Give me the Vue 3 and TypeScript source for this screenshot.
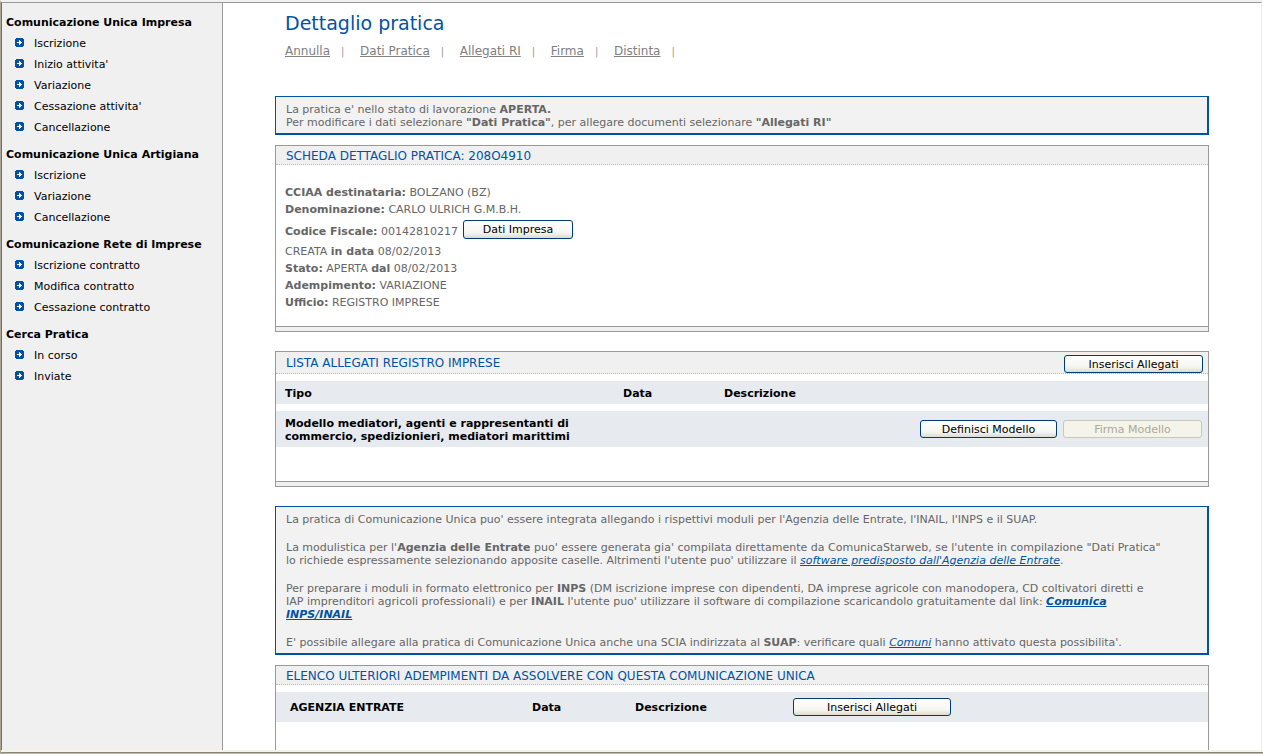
<script setup lang="ts">
interface MenuGroup {
  title: string
  items: string[]
}

const menu: MenuGroup[] = [
  {
    title: 'Comunicazione Unica Impresa',
    items: ['Iscrizione', "Inizio attivita'", 'Variazione', "Cessazione attivita'", 'Cancellazione'],
  },
  { title: 'Comunicazione Unica Artigiana', items: ['Iscrizione', 'Variazione', 'Cancellazione'] },
  {
    title: 'Comunicazione Rete di Imprese',
    items: ['Iscrizione contratto', 'Modifica contratto', 'Cessazione contratto'],
  },
  { title: 'Cerca Pratica', items: ['In corso', 'Inviate'] },
]

const tabs: string[] = ['Annulla', 'Dati Pratica', 'Allegati RI', 'Firma', 'Distinta']
</script>

<template>
  <div class="window">
    <div class="frame">
      <nav class="sidebar" aria-label="Menu">
        <section v-for="group in menu" :key="group.title" class="group">
          <h2>{{ group.title }}</h2>
          <ul>
            <li v-for="item in group.items" :key="item">
              <a href="#">
                <svg class="bullet" width="9" height="9" viewBox="0 0 9 9" shape-rendering="crispEdges" aria-hidden="true">
                  <path d="M1 0h7v1h1v7h-1v1H1v-1H0V1h1z" fill="#0052a5" />
                  <path d="M4 2h1v1h1v1h1v1h-1v1h-1v1h-1V5H2V4h2z" fill="#fff" />
                </svg>
                <span>{{ item }}</span>
              </a>
            </li>
          </ul>
        </section>
      </nav>

      <main class="content">
        <h1>Dettaglio pratica</h1>
        <nav class="tabs" aria-label="Sezioni della pratica">
          <template v-for="tab in tabs" :key="tab">
            <a href="#">{{ tab }}</a><span class="bar">|</span>
          </template>
        </nav>

        <div class="notice">
          <p>
            La pratica e' nello stato di lavorazione <b>APERTA.</b><br />
            Per modificare i dati selezionare <b>"Dati Pratica"</b>, per allegare documenti selezionare
            <b>"Allegati RI"</b>
          </p>
        </div>

        <section class="card detail">
          <header><h3>SCHEDA DETTAGLIO PRATICA: 208O4910</h3></header>
          <div class="facts">
            <p><b>CCIAA destinataria:</b> BOLZANO (BZ)</p>
            <p><b>Denominazione:</b> CARLO ULRICH G.M.B.H.</p>
            <p class="with-button">
              <span><b>Codice Fiscale:</b> 00142810217</span>
              <button type="button" class="btn w-110">Dati Impresa</button>
            </p>
            <p>CREATA <b>in data</b> 08/02/2013</p>
            <p><b>Stato:</b> APERTA <b>dal</b> 08/02/2013</p>
            <p><b>Adempimento:</b> VARIAZIONE</p>
            <p><b>Ufficio:</b> REGISTRO IMPRESE</p>
          </div>
          <div class="foot"></div>
        </section>

        <section class="card attachments">
          <header class="tall">
            <h3>LISTA ALLEGATI REGISTRO IMPRESE</h3>
            <button type="button" class="btn w-139">Inserisci Allegati</button>
          </header>
          <table class="list">
            <colgroup>
              <col class="c-type" />
              <col class="c-date" />
              <col class="c-desc" />
              <col />
            </colgroup>
            <thead>
              <tr>
                <th scope="col">Tipo</th>
                <th scope="col">Data</th>
                <th scope="col">Descrizione</th>
                <td></td>
              </tr>
            </thead>
            <tbody>
              <tr>
                <th scope="row">Modello mediatori, agenti e rappresentanti di commercio, spedizionieri, mediatori marittimi</th>
                <td></td>
                <td></td>
                <td>
                  <div class="actions">
                    <button type="button" class="btn w-137">Definisci Modello</button>
                    <button type="button" class="btn w-139" disabled>Firma Modello</button>
                  </div>
                </td>
              </tr>
            </tbody>
          </table>
          <div class="foot"></div>
        </section>

        <div class="notice">
          <p>
            La pratica di Comunicazione Unica puo' essere integrata allegando i rispettivi moduli per l'Agenzia delle
            Entrate, l'INAIL, l'INPS e il SUAP.
          </p>
          <p>
            La modulistica per l'<b>Agenzia delle Entrate</b> puo' essere generata gia' compilata direttamente da
            ComunicaStarweb, se l'utente in compilazione "Dati Pratica"<br />
            lo richiede espressamente selezionando apposite caselle. Altrimenti l'utente puo' utilizzare il
            <a href="#">software predisposto dall'Agenzia delle Entrate</a>.
          </p>
          <p>
            Per preparare i moduli in formato elettronico per <b>INPS</b> (DM iscrizione imprese con dipendenti, DA
            imprese agricole con manodopera, CD coltivatori diretti e<br />
            IAP imprenditori agricoli professionali) e per <b>INAIL</b> l'utente puo' utilizzare il software di
            compilazione scaricandolo gratuitamente dal link:
            <a href="#"><b>Comunica<br />INPS/INAIL</b></a>
          </p>
          <p>
            E' possibile allegare alla pratica di Comunicazione Unica anche una SCIA indirizzata al <b>SUAP</b>:
            verificare quali <a href="#">Comuni</a> hanno attivato questa possibilita'.
          </p>
        </div>

        <section class="card duties">
          <header><h3>ELENCO ULTERIORI ADEMPIMENTI DA ASSOLVERE CON QUESTA COMUNICAZIONE UNICA</h3></header>
          <table class="agency">
            <colgroup>
              <col class="a-name" />
              <col class="a-date" />
              <col class="a-desc" />
              <col />
            </colgroup>
            <thead>
              <tr>
                <th scope="col">AGENZIA ENTRATE</th>
                <th scope="col">Data</th>
                <th scope="col">Descrizione</th>
                <td><button type="button" class="btn w-158">Inserisci Allegati</button></td>
              </tr>
            </thead>
          </table>
        </section>
      </main>
    </div>
    <div class="edge"></div>
  </div>
</template>

<style>
body {
  margin: 0;
  background: #fff;
}
</style>

<style scoped>
.window {
  display: flex;
  flex-direction: column;
  height: 100vh;
  box-sizing: border-box;
  overflow: hidden;
  font-family: Verdana, "DejaVu Sans", sans-serif;
  font-size: 11px;
  line-height: 13px;
  color: #666;
  border-top: 2px solid #f1f1f1;
  border-left: 1px solid #aca899;
}

.frame {
  display: flex;
  flex: 1;
  min-height: 0;
  border-top: 1px solid #999;
  border-left: 1px solid #716f64;
  margin-right: 1px;
  border-right: 1px solid #ececec;
}

.edge {
  flex: none;
  height: 1px;
  border-top: 2px solid #f6f4e8;
  border-bottom: 1px solid #b9b6a6;
  background: #8a8778;
}

h1,
h2,
h3,
p,
ul {
  margin: 0;
  padding: 0;
}

.sidebar {
  flex: none;
  width: 220px;
  padding-top: 9px;
  background: #f0f0f0;
  border-right: 1px solid #999;
}

.group {
  margin-bottom: 6px;
}

.sidebar h2 {
  padding-left: 4px;
  font-size: 11px;
  line-height: 21px;
  color: #000;
  white-space: nowrap;
}

.sidebar ul {
  list-style: none;
}

.sidebar a {
  display: flex;
  align-items: center;
  gap: 10px;
  height: 21px;
  padding-left: 13px;
  color: #000;
  text-decoration: none;
}

.bullet {
  flex: none;
  margin-bottom: 2px;
}

.content {
  flex: 1;
  min-width: 0;
  padding: 8px 52px 0;
  overflow: hidden;
}

h1 {
  padding-left: 10px;
  font-size: 19px;
  font-weight: 400;
  line-height: 24px;
  color: #0052a5;
}

.tabs {
  display: flex;
  align-items: center;
  height: 16px;
  margin: 8px 0 37px;
  padding-left: 10px;
  font-size: 12px;
}

.tabs a {
  color: #808080;
}

.bar {
  width: 5px;
  margin: 0 14px 0 11px;
  font-size: 10px;
  color: #999;
}

.notice {
  padding: 6px 10px 4px;
  background: #f2f2f2;
  border: 1px solid #0052a5;
  border-right-width: 2px;
  border-bottom-width: 2px;
}

.notice p + p {
  margin-top: 15px;
}

.notice a {
  font-style: italic;
  color: #0052a5;
}

.card {
  border: 1px solid #999;
}

.detail {
  margin: 10px 0 19px;
}

.attachments {
  margin-bottom: 19px;
}

.duties {
  height: 200px;
  margin-top: 10px;
}

.card header {
  display: flex;
  align-items: center;
  justify-content: space-between;
  height: 16px;
  padding: 2px 5px 0 10px;
  background: #f0f0f0;
  border-bottom: 1px dotted #bbb;
}

.card header.tall {
  height: 21px;
  padding-top: 0;
}

.tall .btn {
  margin-top: 3px;
}

.card h3 {
  font-size: 12px;
  font-weight: 400;
  line-height: 16px;
  color: #0052a5;
}

.facts {
  padding: 19px 9px 15px;
  line-height: 17px;
}

.with-button {
  display: flex;
  align-items: center;
  gap: 5px;
  height: 25px;
}

.with-button span {
  padding-top: 2px;
}

.with-button .btn {
  margin-bottom: 2px;
}

.foot {
  height: 4px;
  background: #f0f0f0;
  border-top: 1px solid #999;
}

.btn {
  height: 18px;
  padding: 0;
  font: inherit;
  line-height: 15px;
  color: #000;
  white-space: nowrap;
  vertical-align: middle;
  background: linear-gradient(#fff, #f5f5f0 70%, #dcdad0);
  border: 1px solid #003c74;
  border-radius: 3px;
}

.btn:disabled {
  color: #aca899;
  background: #f5f4ea;
  border-color: #c9c7ba;
}

.w-110 {
  width: 110px;
  height: 19px;
}

.w-137 {
  width: 137px;
}

.w-139 {
  width: 139px;
}

.w-158 {
  width: 158px;
}

table {
  width: 100%;
  table-layout: fixed;
  border-spacing: 0 7px;
}

th,
td {
  padding: 0 9px;
  background: #e7eaef;
}

th {
  padding-top: 2px;
  font-weight: 700;
  color: #000;
  text-align: left;
}

.list {
  margin-bottom: 27px;
}

.list thead tr {
  height: 23px;
}

.list tbody tr {
  height: 36px;
}

.list td {
  padding: 0 6px 0 9px;
}

.c-type {
  width: 338px;
}

.c-date {
  width: 101px;
}

.c-desc {
  width: 190px;
}

.actions {
  display: flex;
  justify-content: flex-end;
  gap: 6px;
}

.agency tr {
  height: 30px;
}

.agency th,
.agency td {
  padding: 0 14px;
}

.a-name {
  width: 242px;
}

.a-date {
  width: 103px;
}

.a-desc {
  width: 158px;
}
</style>
